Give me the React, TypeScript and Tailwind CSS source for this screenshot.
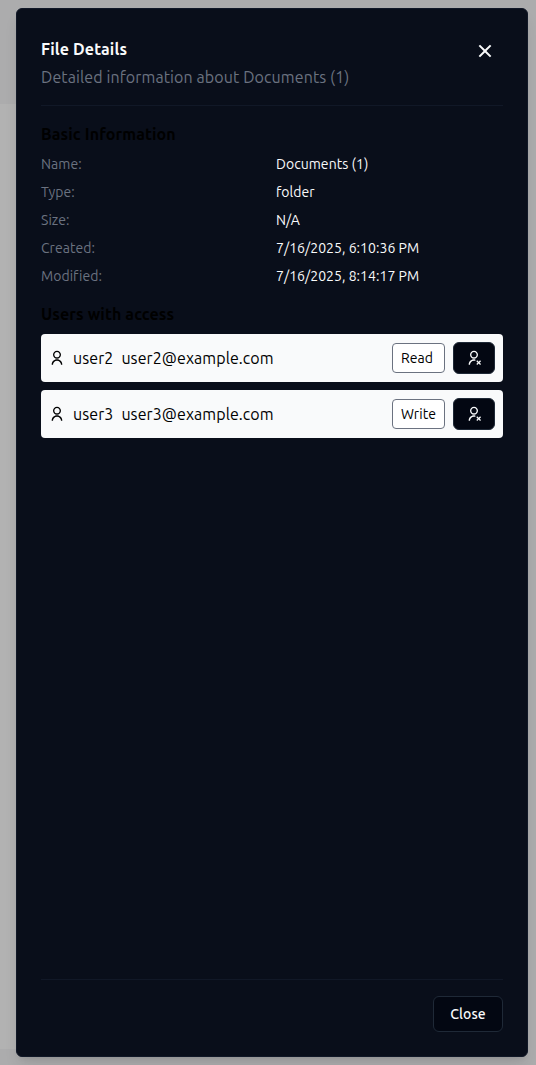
import { RiCloseLine, RiUserLine, RiUserUnfollowLine } from "react-icons/ri";

const details = [
  { label: "Name:", value: "Documents (1)" },
  { label: "Type:", value: "folder" },
  { label: "Size:", value: "N/A" },
  { label: "Created:", value: "7/16/2025, 6:10:36 PM" },
  { label: "Modified:", value: "7/16/2025, 8:14:17 PM" },
];

const users = [
  { name: "user2", email: "user2@example.com", access: "Read" },
  { name: "user3", email: "user3@example.com", access: "Write" },
];

export default function App() {
  return (
    <div className="flex h-[1065px] w-full flex-col bg-[#acacad] bg-[linear-gradient(#b2b2b2,#b2b2b2)] bg-[length:520px_945px] bg-[position:0_104px] bg-no-repeat pt-2 pr-2 pb-2 pl-4 font-['Ubuntu','Noto_Sans',sans-serif]">
      <section
        role="dialog"
        className="flex flex-1 flex-col rounded-md border border-[#111827] bg-[#090e1a] px-6 pt-6 pb-6 shadow-lg"
      >
        <header className="flex h-[73px] shrink-0 items-start justify-between border-b border-[#111827]">
          <div className="pt-0.5">
            <h1 className="h-7 text-base leading-7 font-semibold tracking-[0.15px] whitespace-nowrap text-[#f9fafb]">
              File Details
            </h1>
            <p className="h-7 text-base leading-7 tracking-[0.1px] whitespace-nowrap text-[#6b7280]">
              Detailed information about Documents (1)
            </p>
          </div>
          <button aria-label="Dismiss" className="mt-1.5 mr-1.5 text-[#f9fafb]">
            <RiCloseLine className="size-6" />
          </button>
        </header>

        <main className="flex flex-1 flex-col pt-4">
          <h2 className="h-6 text-base leading-6 font-semibold tracking-[0.13px] whitespace-nowrap text-black">
            Basic Information
          </h2>
          <dl className="mt-2 flex flex-col gap-2 text-sm leading-5 tracking-[0.04px]">
            {details.map((d) => (
              <div key={d.label} className="grid grid-cols-2 gap-2 whitespace-nowrap">
                <dt className="text-[#6b7280]">{d.label}</dt>
                <dd className="text-[#f9fafb]">{d.value}</dd>
              </div>
            ))}
          </dl>
          <h2 className="mt-4 h-6 text-base leading-6 font-semibold tracking-[0.13px] whitespace-nowrap text-black">
            Users with access
          </h2>
          <ul className="mt-2 flex flex-col gap-2">
            {users.map((u) => (
              <li key={u.name} className="flex h-12 items-center gap-2 rounded bg-[#f9fafb] px-2 tracking-[0.08px] text-black">
                <RiUserLine className="size-4" />
                <span>{u.name}</span>
                <span>{u.email}</span>
                <span className="ml-auto flex h-[30px] w-[53px] items-center rounded border border-[#6b7280] bg-white pl-2 text-sm">
                  {u.access}
                </span>
                <button
                  aria-label="Remove access"
                  className="flex h-8 w-[42px] items-center justify-center rounded-md border border-[#1f2937] bg-[#030712] text-[#f9fafb]"
                >
                  <RiUserUnfollowLine className="size-4" />
                </button>
              </li>
            ))}
          </ul>
        </main>

        <footer className="flex shrink-0 justify-end border-t border-[#111827] pt-4">
          <button className="h-9 w-[70px] rounded-md border border-[#1f2937] bg-[#030712] text-sm leading-5 font-medium tracking-[0.1px] text-[#f9fafb]">
            Close
          </button>
        </footer>
      </section>
    </div>
  );
}
